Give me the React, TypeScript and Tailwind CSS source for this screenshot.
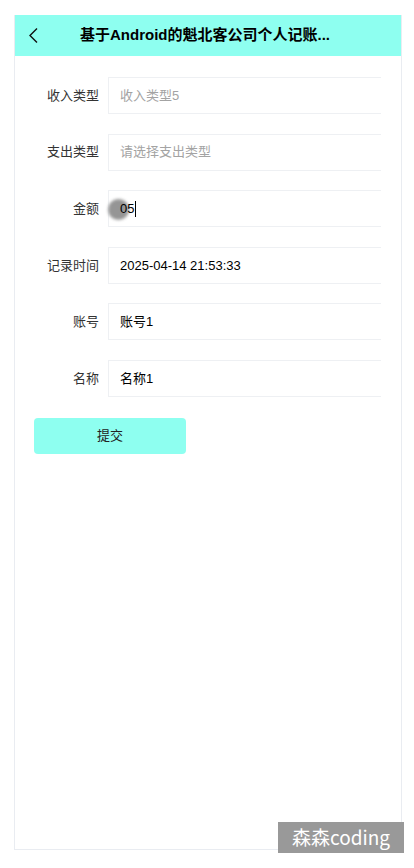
import React from 'react'

const font = { fontFamily: '"Liberation Sans", "Noto Sans CJK SC", sans-serif' }

type Row = { label: string; value: string; muted?: boolean; touch?: boolean; caret?: boolean }

const rows: Row[] = [
  { label: '收入类型', value: '收入类型5', muted: true },
  { label: '支出类型', value: '请选择支出类型', muted: true },
  { label: '金额', value: '05', touch: true, caret: true },
  { label: '记录时间', value: '2025-04-14 21:53:33' },
  { label: '账号', value: '账号1' },
  { label: '名称', value: '名称1' },
]

export default function App() {
  return (
    <div className="relative w-[414px] h-[868px] bg-white overflow-hidden" style={font}>
      <div className="ml-[14px] mt-[15px] w-[388px] h-[835px] border-l border-r border-b border-[#e9ecf1] flex flex-col">
        {/* header */}
        <div className="relative h-[41px] bg-[#8efff0] flex items-center justify-center">
          <svg className="absolute left-[13px] top-[12px]" width="11" height="17" viewBox="0 0 11 17" fill="none">
            <path d="M9 1.5 L2 8.5 L9 15.5" stroke="#111" strokeWidth="1.4" />
          </svg>
          <span className="text-[15px] font-bold text-black ml-[-6px]">基于Android的魁北客公司个人记账...</span>
        </div>

        {/* form */}
        <div className="pt-[21px] flex flex-col gap-[19.6px]">
          {rows.map((r) => (
            <div key={r.label} className="flex items-center h-[37px]">
              <div className="w-[93px] pr-[9px] text-right text-[13px] text-[#333]">{r.label}</div>
              <div className="relative w-[273px] h-[37px] border-t border-l border-b border-[#eef0f3] flex items-center pl-[11px]">
                {r.touch && (
                  <div className="absolute left-[-1px] top-[8px] w-[21px] h-[21px] rounded-full bg-[#8a8a8a] blur-[1.5px] opacity-90" />
                )}
                <span className={`relative text-[13px] ${r.muted ? 'text-[#a3a3a3]' : 'text-black'}`}>{r.value}</span>
                {r.caret && <span className="relative w-px h-[16px] bg-black ml-[1px]" />}
              </div>
            </div>
          ))}
        </div>

        <div className="pl-[19px] pt-[21px]">
          <button className="w-[152px] h-[36px] rounded-[4px] bg-[#8efff0] text-[13px] text-[#222] flex items-center justify-center">
            提交
          </button>
        </div>
      </div>

      {/* watermark */}
      <div className="absolute left-[278px] top-[822px] w-[126px] h-[31px] bg-[#999999] flex items-center justify-center">
        <span className="text-white text-[19px]" style={{ fontFamily: '"Noto Sans CJK SC", "Open Sans", sans-serif' }}>森森coding</span>
      </div>
    </div>
  )
}
